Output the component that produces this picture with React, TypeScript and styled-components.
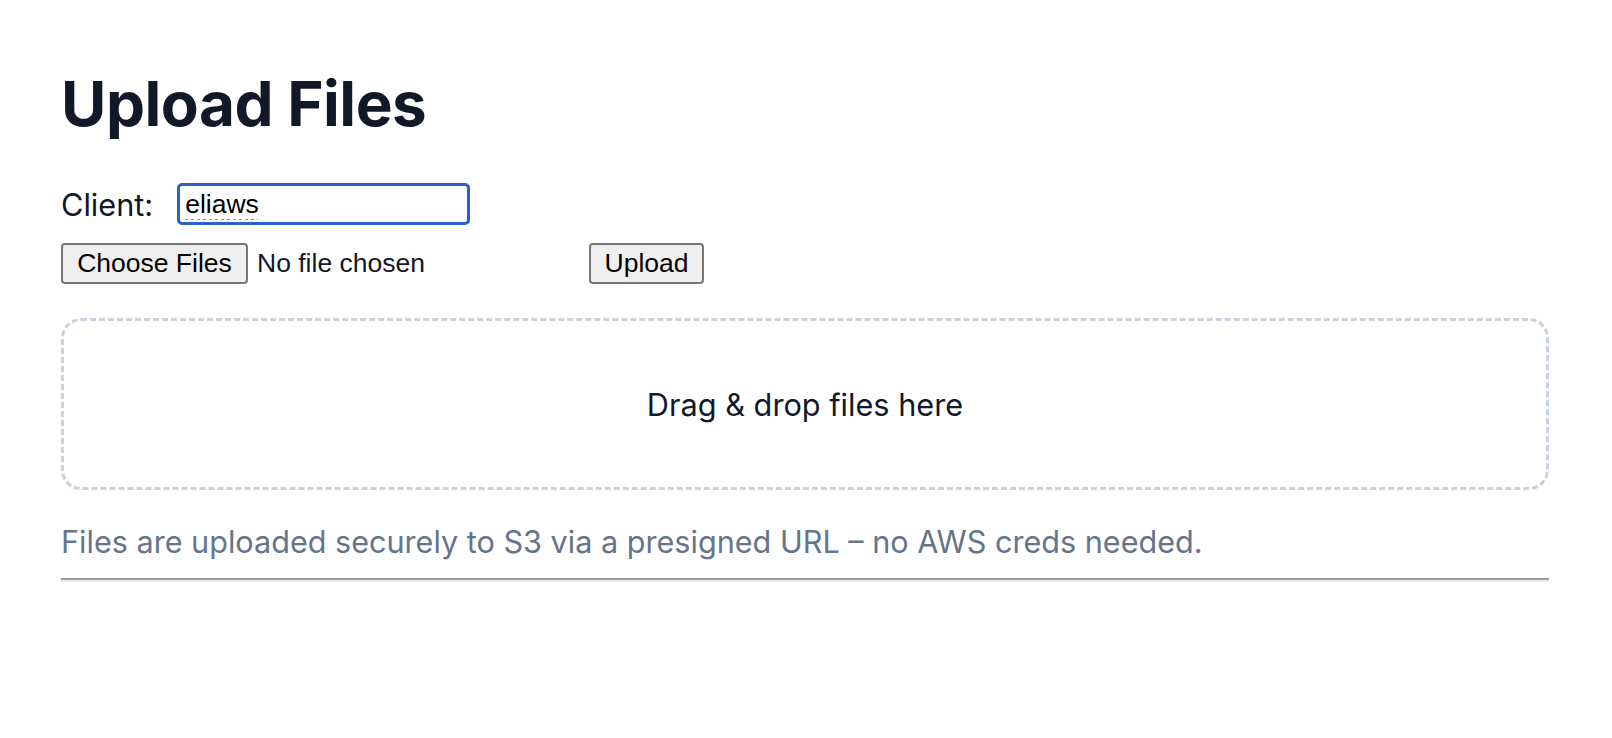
import React from "react";
import styled, { createGlobalStyle } from "styled-components";

const GlobalStyle = createGlobalStyle`
  body {
    margin: 0;
    background: #ffffff;
    font-family: Inter, "Noto Sans", sans-serif;
    color: #111827;
  }
`;

const Page = styled.main`
  display: flex;
  flex-direction: column;
  padding: 0 63px 0 61px;
`;

const Title = styled.h1`
  font-size: 62px;
  font-weight: 700;
  line-height: 1.2;
  letter-spacing: -0.5px;
  color: #111827;
  margin: 67px 0 42px;
`;

const FieldRow = styled.div`
  display: flex;
  align-items: center;
  gap: 24px;
`;

const Label = styled.label`
  font-size: 30.7px;
  color: #111827;
`;

const TextInput = styled.input`
  box-sizing: border-box;
  width: 293px;
  height: 42px;
  padding: 0 5px;
  border: 3px solid #2a62c9;
  border-radius: 5px;
  outline: none;
  font-family: "Liberation Sans", Arial, sans-serif;
  font-size: 26.5px;
  color: #000;
  text-decoration: underline dotted #f06a6a;
  text-decoration-thickness: 3px;
  text-underline-offset: 6px;
`;

const UploadRow = styled.div`
  display: flex;
  align-items: center;
  gap: 9px;
  margin-top: 18px;
`;

const FilePicker = styled.div`
  display: flex;
  align-items: center;
  gap: 9px;
  width: 519px;
`;

const NativeButton = styled.button<{ $width: number }>`
  box-sizing: border-box;
  width: ${(p) => p.$width}px;
  height: 41px;
  padding: 0;
  background: #efefef;
  border: 2px solid #767676;
  border-radius: 4px;
  font-family: "Liberation Sans", Arial, sans-serif;
  font-size: 26.5px;
  color: #000;
`;

const FileStatus = styled.span`
  font-family: "Liberation Sans", Arial, sans-serif;
  font-size: 26.5px;
  color: #111827;
`;

const DropZone = styled.div`
  box-sizing: border-box;
  height: 172px;
  margin-top: 34px;
  display: flex;
  align-items: center;
  justify-content: center;
  border: 3px dashed #c8d1de;
  border-radius: 20px;
  font-size: 30.7px;
  color: #111827;
`;

const Hint = styled.p`
  margin: 34px 0 0;
  font-size: 30.6px;
  line-height: 1.2;
  color: #64748b;
`;

const Divider = styled.hr`
  width: 100%;
  box-sizing: border-box;
  margin: 17px 0 0;
  border: 0;
  border-top: 2px solid #9a9a9a;
  border-bottom: 2px solid #eeeeee;
`;

export default function App() {
  return (
    <>
      <GlobalStyle />
      <Page>
        <Title>Upload Files</Title>

        <FieldRow>
          <Label htmlFor="client">Client:</Label>
          <TextInput id="client" defaultValue="eliaws" spellCheck={false} />
        </FieldRow>

        <UploadRow>
          <FilePicker>
            <NativeButton $width={187}>Choose Files</NativeButton>
            <FileStatus>No file chosen</FileStatus>
          </FilePicker>
          <NativeButton $width={115}>Upload</NativeButton>
        </UploadRow>

        <DropZone>Drag &amp; drop files here</DropZone>

        <Hint>Files are uploaded securely to S3 via a presigned URL – no AWS creds needed.</Hint>
        <Divider />
      </Page>
    </>
  );
}
